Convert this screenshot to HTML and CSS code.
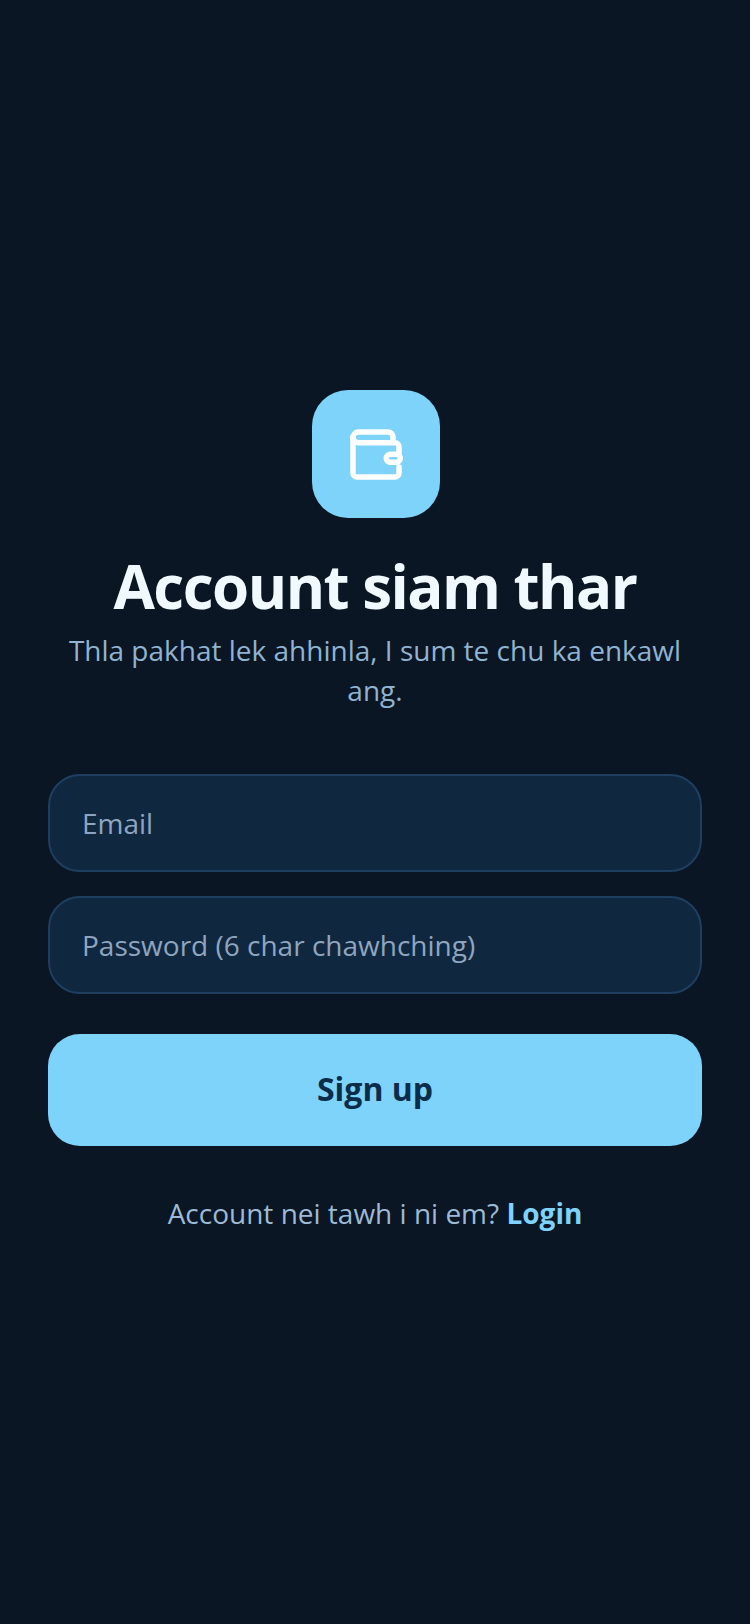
FILE: index.html
```html
<!DOCTYPE html>
<html>
<head>
  <meta charset="UTF-8">
  <title>Account siam thar</title>
  <link rel="stylesheet" href="styles.css">
</head>
<body>
  <div class="signup-container">
    <div class="logo-box">
      <svg class="logo-icon" width="56" height="56" viewBox="0 0 56 56" fill="none" stroke="#ffffff" stroke-width="5.5" stroke-linecap="round" stroke-linejoin="round">
        <path d="M45 16.75V11a5 5 0 0 0-5-5H10a5.4 5.4 0 0 0 0 10.75H47a4 4 0 0 1 4 4v8"/>
        <path d="M5 11v36a4 4 0 0 0 4 4H47a4 4 0 0 0 4-4v-6"/>
        <rect x="38.25" y="28.25" width="14" height="8" rx="4"/>
      </svg>
    </div>
    <h1>Account siam thar</h1>
    <p class="subtitle">Thla pakhat lek ahhinla, I sum te chu ka enkawl ang.</p>

    <div class="form-group">
      <input type="email" placeholder="Email">
      <input type="password" placeholder="Password (6 char chawhching)">
    </div>

    <button class="signup-button">Sign up</button>

    <p class="login-text">Account nei tawh i ni em? <a href="#">Login</a></p>
  </div>
</body>
</html>
```

FILE: styles.css
```css
* {
  box-sizing: border-box;
}

body {
  margin: 0;
  min-height: 1624px;
  display: flex;
  flex-direction: column;
  justify-content: center;
  font-family: 'Open Sans', sans-serif;
  background-color: #0a1624;
  color: white;
}

.signup-container {
  display: flex;
  flex-direction: column;
  align-items: center;
  padding: 0 48px 1px;
}

.logo-box {
  width: 128px;
  height: 128px;
  border-radius: 36px;
  background-color: #7dd3fa;
  display: flex;
  align-items: center;
  justify-content: center;
  margin-left: 2px;
  margin-bottom: 28px;
}

h1 {
  margin: 0 0 4px;
  font-size: 60px;
  line-height: 80px;
  font-weight: 700;
  letter-spacing: -1.5px;
  color: #f0f9ff;
}

.subtitle {
  margin: 0 0 64px;
  font-size: 28px;
  line-height: 40px;
  text-align: center;
  color: #8fb3d0;
}

.form-group {
  width: 100%;
  display: flex;
  flex-direction: column;
  gap: 24px;
  margin-bottom: 40px;
}

input {
  width: 100%;
  height: 98px;
  padding: 0 32px;
  border-radius: 32px;
  border: 2px solid #1e3f5f;
  background-color: #0f2840;
  font-family: inherit;
  font-size: 28px;
  color: white;
}

input::placeholder {
  color: #8fa5bf;
  opacity: 1;
}

.signup-button {
  width: 100%;
  height: 112px;
  padding-bottom: 4px;
  border: none;
  border-radius: 32px;
  background-color: #7dd3fa;
  color: #0c2d4a;
  font-family: inherit;
  font-size: 32px;
  font-weight: 700;
  margin-bottom: 47px;
}

.login-text {
  margin: 0;
  font-size: 28px;
  line-height: 40px;
  color: #9cbad4;
}

.login-text a {
  color: #7dd3fa;
  font-weight: 700;
  text-decoration: none;
}
```
